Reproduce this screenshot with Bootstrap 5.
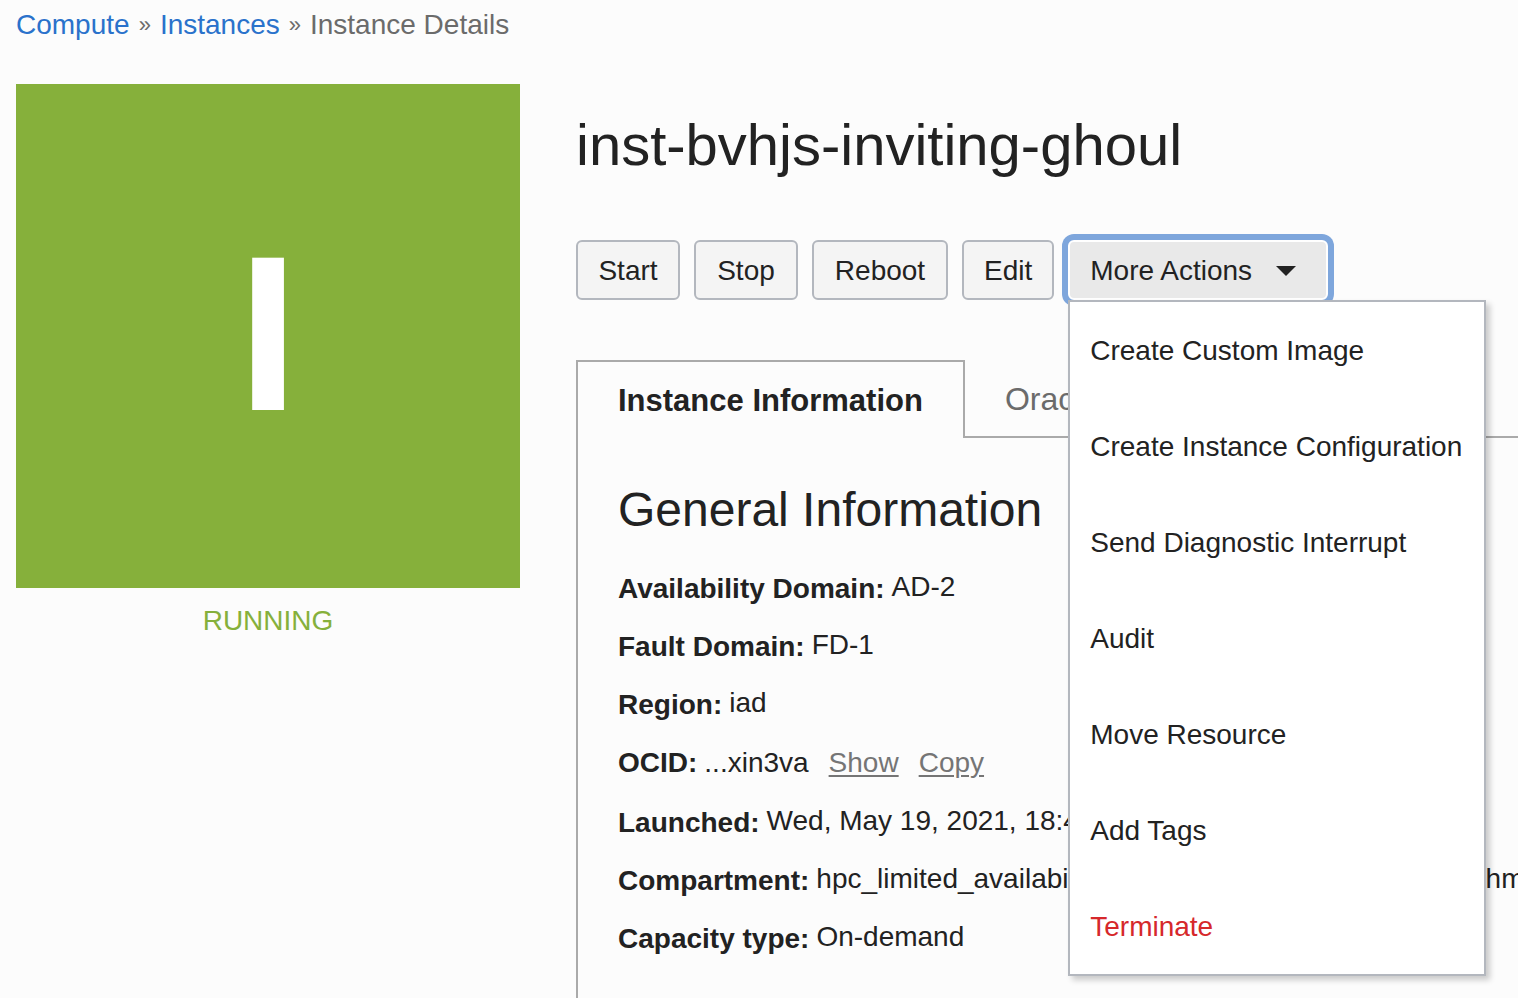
<!DOCTYPE html>
<html lang="en">
<head>
<meta charset="utf-8">
<meta name="viewport" content="width=device-width, initial-scale=1">
<title>Instance Details</title>
<link href="https://cdn.jsdelivr.net/npm/bootstrap@5.3.0/dist/css/bootstrap.min.css" rel="stylesheet">
<style>
  body {
    background: #fcfcfc;
    color: #222;
    font: 28px/32px "Liberation Sans", Arial, sans-serif;
    overflow-x: hidden;
  }
  .crumbs { --bs-breadcrumb-divider: '»'; --bs-breadcrumb-item-padding-x: 9px; --bs-breadcrumb-margin-bottom: 43px; padding-top: 9px; font-size: 28px; }
  .crumbs .breadcrumb-item, .crumbs .breadcrumb-item::before { color: #6b6b6b !important; }
  .crumbs .breadcrumb-item::before { font-size: 22px; }
  .crumbs a { color: #2a72cb; text-decoration: none; }
  .page-shell { padding: 0 0 0 16px; }
  .detail-layout { gap: 56px; }
  .status-side { flex: 0 0 504px; color: #86b03b; }
  .status-tile { background: #86b03b; color: #fff; font-size: 220px; line-height: 1; }
  .status-letter { padding-bottom: 4px; }
  .status-label { margin-top: 17px; }
  .detail-main { min-width: 0; }
  .instance-name { font-size: 58px; line-height: 64px; margin: 29px 0 63px; font-weight: 400; }
  .actions { gap: 14px; margin-bottom: 60px; }
  .btn-action {
    --bs-btn-color: #222; --bs-btn-bg: #f4f4f4; --bs-btn-border-color: #b3b7be;
    --bs-btn-hover-color: #222; --bs-btn-hover-bg: #e9e9e9; --bs-btn-hover-border-color: #b3b7be;
    --bs-btn-font-size: 28px; --bs-btn-line-height: 32px;
    --bs-btn-border-width: 2px; --bs-btn-border-radius: 6px;
    padding: 13px 20px 11px;
  }
  .btn-narrow { min-width: 104px; }
  .btn-wide { min-width: 136px; }
  .btn-action.show, .btn-action.show:hover {
    min-width: 260px; text-align: left;
    background: #e9e9e9; border-color: #fff; color: #222; padding-right: 30px;
    box-shadow: 0 0 0 6px #7ea6dc;
  }
  .btn-action.dropdown-toggle::after {
    margin-left: 24px; vertical-align: 4px;
    border-top: 10px solid; border-left: 10px solid transparent; border-right: 10px solid transparent;
  }
  .action-menu {
    --bs-dropdown-border-width: 2px; --bs-dropdown-border-color: #b3b7be; --bs-dropdown-border-radius: 0;
    --bs-dropdown-padding-y: 0; --bs-dropdown-font-size: 28px; --bs-dropdown-bg: #fff;
    --bs-dropdown-link-color: #222; --bs-dropdown-min-width: 418px;
    top: 100%; left: 0; box-shadow: 4px 4px 6px rgba(0, 0, 0, .2);
  }
  .action-menu .dropdown-item { padding: 33px 20px 31px; }
  .action-menu .danger-item { color: #d6282b; }
  .info-tabs {
    --bs-nav-tabs-border-width: 2px; --bs-nav-tabs-border-color: #aaa; --bs-nav-tabs-border-radius: 0;
    --bs-nav-link-color: #6b6b6b; --bs-nav-tabs-link-active-color: #222;
    --bs-nav-tabs-link-active-bg: #fcfcfc; --bs-nav-tabs-link-active-border-color: #aaa;
  }
  .info-tabs .nav-link { padding: 21px 40px 21px 38px; white-space: nowrap; font-size: 32px; }
  .info-tabs .nav-link.active { border-bottom: 0; padding: 23px 40px 21px; font-size: 31px; font-weight: 700; }
  .info-panel { border-left: 2px solid #aaa; padding: 40px 0 48px 40px; }
  .panel-title { font-size: 48px; line-height: 64px; font-weight: 400; margin: 0 0 29px; }
  .fact { gap: 7px; height: 58px; white-space: nowrap; }
  .fact dt { padding-top: 2px; }
  .fact dd { margin: 0; }
  .fact-id { height: 60px; }
  .fact-id dd { padding-top: 2px; }
  .fact-id a { color: #757575; margin-left: 20px; text-underline-offset: 3px; text-decoration-thickness: 2px; }
</style>
</head>
<body>
<div class="container-fluid page-shell overflow-hidden">
  <nav aria-label="breadcrumb">
    <ol class="breadcrumb crumbs">
      <li class="breadcrumb-item"><a href="#">Compute</a></li>
      <li class="breadcrumb-item"><a href="#">Instances</a></li>
      <li class="breadcrumb-item active" aria-current="page">Instance Details</li>
    </ol>
  </nav>
  <div class="d-flex align-items-start detail-layout">
    <aside class="status-side text-center">
      <div class="status-tile ratio ratio-1x1">
        <div class="d-flex align-items-center justify-content-center fw-bold status-letter">I</div>
      </div>
      <div class="status-label">RUNNING</div>
    </aside>
    <main class="flex-grow-1 detail-main">
      <h1 class="instance-name">inst-bvhjs-inviting-ghoul</h1>
      <div class="d-flex actions">
        <button type="button" class="btn btn-action btn-narrow">Start</button>
        <button type="button" class="btn btn-action btn-narrow">Stop</button>
        <button type="button" class="btn btn-action btn-wide">Reboot</button>
        <button type="button" class="btn btn-action">Edit</button>
        <div class="dropdown">
          <button type="button" class="btn btn-action dropdown-toggle show" data-bs-toggle="dropdown" aria-expanded="true">More Actions</button>
          <ul class="dropdown-menu action-menu show">
            <li><a class="dropdown-item" href="#">Create Custom Image</a></li>
            <li><a class="dropdown-item" href="#">Create Instance Configuration</a></li>
            <li><a class="dropdown-item" href="#">Send Diagnostic Interrupt</a></li>
            <li><a class="dropdown-item" href="#">Audit</a></li>
            <li><a class="dropdown-item" href="#">Move Resource</a></li>
            <li><a class="dropdown-item" href="#">Add Tags</a></li>
            <li><a class="dropdown-item danger-item" href="#">Terminate</a></li>
          </ul>
        </div>
      </div>
      <ul class="nav nav-tabs flex-nowrap info-tabs">
        <li class="nav-item"><a class="nav-link active" aria-current="page" href="#">Instance Information</a></li>
        <li class="nav-item"><a class="nav-link" href="#">Oracle Cloud Agent</a></li>
      </ul>
      <section class="info-panel overflow-hidden">
        <h2 class="panel-title">General Information</h2>
        <dl class="mb-0">
          <div class="d-flex fact"><dt>Availability Domain:</dt><dd>AD-2</dd></div>
          <div class="d-flex fact"><dt>Fault Domain:</dt><dd>FD-1</dd></div>
          <div class="d-flex fact"><dt>Region:</dt><dd>iad</dd></div>
          <div class="d-flex fact fact-id"><dt>OCID:</dt><dd>...xin3va<a href="#">Show</a><a href="#">Copy</a></dd></div>
          <div class="d-flex fact"><dt>Launched:</dt><dd>Wed, May 19, 2021, 18:43</dd></div>
          <div class="d-flex fact"><dt>Compartment:</dt><dd>hpc_limited_availability (root)/compute/cluster/node-1/hm</dd></div>
          <div class="d-flex fact"><dt>Capacity type:</dt><dd>On-demand</dd></div>
        </dl>
      </section>
    </main>
  </div>
</div>
<script src="https://cdn.jsdelivr.net/npm/bootstrap@5.3.0/dist/js/bootstrap.bundle.min.js"></script>
</body>
</html>
